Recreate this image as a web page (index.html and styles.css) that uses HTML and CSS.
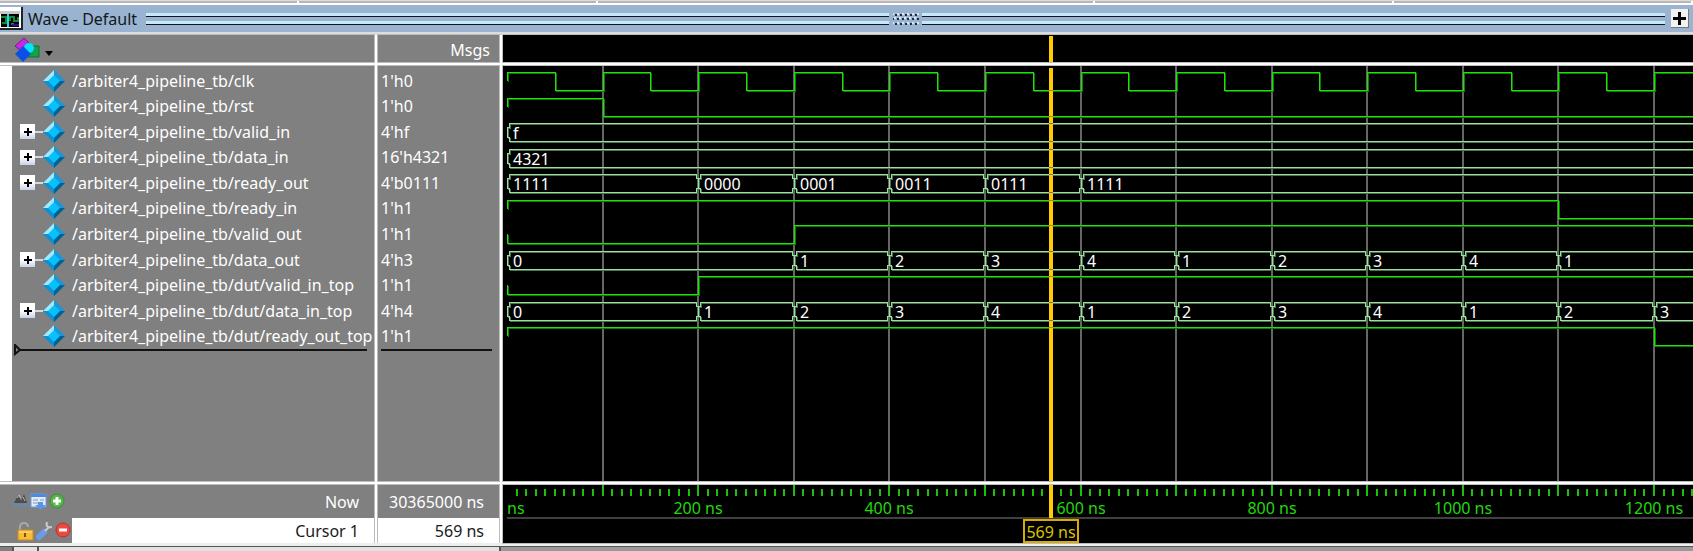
FILE: index.html
```html
<!DOCTYPE html>
<html lang="en">
<head>
<meta charset="utf-8">
<title>Wave - Default</title>
<link rel="stylesheet" href="styles.css">
</head>
<body>
<svg class="defs" aria-hidden="true">
  <symbol id="gem" viewBox="0 0 22 22">
    <path d="M11 0L22 11L11 22L0 11Z" fill="#1793d6"/>
    <path d="M11 0V6L6 11H0Z" fill="#a5e7fb"/>
    <path d="M11 0L22 11H16L11 6Z" fill="#1b96d8"/>
    <path d="M22 11L11 22V16L16 11Z" fill="#045f92"/>
    <path d="M0 11H6L11 16V22Z" fill="#128fce"/>
    <path d="M11 5L17 11L11 17L5 11Z" fill="#05c3fa"/>
  </symbol>
</svg>
<main class="app">
  <div class="edge-top"><i></i><i></i><i></i><i></i><i></i></div>
  <header class="titlebar">
    <svg class="app-icon" width="23" height="24" viewBox="0 0 23 24" aria-hidden="true">
      <path d="M0 0H21V22H0Z" fill="#fff"/><path d="M0 22H22V0" fill="none" stroke="#222" stroke-width="2"/>
      <path d="M0 4H20V7H0Z" fill="#c8c8c8"/><path d="M1 7H19V20H1Z" fill="#000"/>
      <path d="M1 10H6V16H2M10 14V10H14V14H18V10M11 17H14" fill="none" stroke="#128a3a" stroke-width="2"/>
      <path d="M8 7V20" stroke="#28d8e8" stroke-width="2"/><path d="M12 18H19" stroke="#3010a0" stroke-width="2"/>
    </svg>
    <h1 class="title">Wave - Default</h1>
    <span class="grip-lines"></span>
    <svg class="grip" width="33" height="14" aria-hidden="true"><defs><pattern id="dots" width="5" height="9" patternUnits="userSpaceOnUse"><path d="M1 2h2v2h-2zM3 6h2v2h-2z" fill="#222c38"/><path d="M3 1h2v2h-2zM0 5h2v2h-2z" fill="#d8e8f4"/></pattern></defs><path d="M4 1H30V13H4Z" fill="url(#dots)"/></svg>
    <span class="grip-lines"></span>
    <button class="dock" aria-label="Dock"><svg width="13" height="13"><path d="M5 0H8V5H13V8H8V13H5V8H0V5H5Z"/></svg></button>
  </header>
  <div class="grid">
    <div class="pane tools">
      <button class="picker" aria-label="Signal type">
        <svg width="40" height="26" viewBox="0 0 40 26">
          <path d="M0 8L9 0L15 6L7 14Z" fill="#c32be0" stroke="#7e1696"/>
          <path d="M13 8H24V19H13Z" fill="#17a04c" stroke="#087536"/>
          <circle cx="14" cy="10" r="5" fill="#00e5fb"/>
          <path d="M8 8L16 16L8 24L0 16Z" fill="#0b50e5"/>
          <path d="M30 13H38L34 18Z" fill="#000"/>
        </svg>
      </button>
    </div>
    <div class="pane msgs-head">Msgs</div>
    <div class="pane wave-head"><svg id="head" class="plot" aria-hidden="true"></svg></div>

    <div class="pane names">
      <ul class="rows" id="names"></ul>
      <svg class="marker" width="8" height="12" viewBox="0 0 8 12" aria-hidden="true"><path d="M1 1V10L6 6Z" fill="#808080" stroke="#111" stroke-width="2"/></svg>
    </div>
    <div class="pane values"><ul class="rows" id="values"></ul></div>
    <div class="pane waves"><svg id="waves" class="plot" role="img" aria-label="Signal waveforms"></svg></div>

    <div class="pane foot-names">
      <div class="foot-row">
        <svg class="foot-icons" width="59" height="20" viewBox="0 0 59 20" aria-hidden="true">
          <path d="M1 11L5 3L8 9L11 2L14 11Z" fill="#4c4c4c"/><path d="M4 6L6 3L8 6M10 5L12 9" stroke="#bbb" fill="none"/><path d="M1 13H14M3 11L1 13L3 15M12 11L14 13L12 15" stroke="#4c8fe0" fill="none"/>
          <path d="M18 2H33V15H18Z" fill="#dfeafa" stroke="#6f9fe0"/><path d="M18 2H33V5H18Z" fill="#4b8be4"/><path d="M20 8H25M20 11H28M27 8H31" stroke="#8899b0"/><path d="M25 10H30V13H33L28 18L22 13H25Z" fill="#5b94e4"/>
          <circle cx="44" cy="9" r="7" fill="#55b548" stroke="#359234"/><path d="M44 5V13M40 9H48" stroke="#fff" stroke-width="3"/>
        </svg>
        <span class="foot-cell">Now</span>
      </div>
      <div class="foot-row">
        <svg class="foot-icons" width="59" height="22" viewBox="0 0 59 22" aria-hidden="true">
          <path d="M7 10V7Q7 3 11 3Q15 3 15 7" stroke="#a8a8a8" stroke-width="2" fill="none"/><path d="M5 10H20V20H5Z" fill="#f8bc3b" stroke="#c98c1e"/><path d="M6 12H19" stroke="#ffe090"/><path d="M12 13V17" stroke="#805000" stroke-width="2"/>
          <path d="M26 17L31 12" stroke="#6b9be5" stroke-width="6" stroke-linecap="round"/><path d="M32 11L36 7M34 2Q32 8 39 7" stroke="#c5c9d0" stroke-width="2" fill="none"/>
          <circle cx="50" cy="10" r="7" fill="#e94b43" stroke="#c32c2c"/><path d="M46 10H54" stroke="#fff" stroke-width="3"/>
        </svg>
        <span class="foot-cell cursor-cell">Cursor 1</span>
      </div>
    </div>
    <div class="pane foot-values">
      <div class="foot-row"><span class="foot-cell">30365000 ns</span></div>
      <div class="foot-row"><span class="foot-cell cursor-cell">569 ns</span></div>
    </div>
    <div class="pane timeline"><svg id="ruler" class="plot" role="img" aria-label="Time ruler"></svg></div>
  </div>
  <div class="edge-bottom"><i></i><i></i><i></i><i></i></div>
</main>
<script src="wave.js"></script>
</body>
</html>
```
FILE: styles.css
```css
* { box-sizing: border-box; }
body { margin: 0; background: #808080; font-family: "Noto Sans", "DejaVu Sans", sans-serif; font-size: 16px; line-height: 20px; color: #fff; }
button { border: 0; padding: 0; background: none; font: inherit; }
svg { display: block; }
.defs { position: absolute; width: 0; height: 0; }
.app { display: flex; flex-direction: column; min-height: 100vh; overflow: hidden; }

.edge-top { display: flex; height: 5px; background: #bab5b8; border-top: 1px solid #ddd; border-bottom: 2px solid #fff; }
.edge-top i { flex: 300 1 0; border-right: 2px solid #fff; }
.edge-top i:nth-child(3) { flex-grow: 500; }
.titlebar { display: flex; align-items: center; height: 30px; padding-right: 4px; background: #9ab3d1; border-bottom: 3px solid #dcdcdc; color: #111820; }
.app-icon { flex: none; }
.title { margin: 0 9px 0 5px; font-size: 16px; font-weight: 400; line-height: 20px; white-space: nowrap; }
.grip-lines { flex: 1 1 0; height: 12px; border-bottom: 1px solid #10161e; background: linear-gradient(#c5e9f7 0 3px, #10161e 3px 4px, #9ab3d1 4px 8px, #c5e9f7 8px 11px); }
.grip { flex: none; }
.dock { display: grid; place-items: center; width: 18px; height: 19px; margin-left: 6px; background: #f2f2f2; border-right: 1px solid #777; border-bottom: 1px solid #777; }

.grid { flex: 1; display: grid; grid-template-columns: 374px 121px 1fr; grid-template-rows: 27px 1fr 58px; gap: 4px; background: #fff; }
.pane { min-width: 0; background: #808080; box-shadow: 0 0 0 1px #bdbdbd; }
.tools { padding: 3px 0 0 15px; }
.msgs-head { padding: 5px 9px; text-align: right; }
.wave-head, .waves, .timeline { position: relative; overflow: hidden; background: #000; }
.plot { position: absolute; inset: 0; width: 100%; height: 100%; font-size: 16px; }

.names { position: relative; border-left: 12px solid #fff; }
.rows { display: grid; grid-template-rows: repeat(11, 1fr); height: 285px; margin: 0 7px 0 4px; padding: 2px 0 0; list-style: none; border-bottom: 2px solid #111; }
.values .rows { margin-left: 3px; }
.rows li { display: flex; align-items: center; min-width: 0; white-space: nowrap; }
#names li { padding-left: 4px; }
.marker { position: absolute; left: 2px; top: 278px; }
.branch { display: flex; align-items: center; flex: none; width: 23px; }
.branch::after { content: ""; flex: 1; height: 2px; background: #d8d8d8; }
.branch.leaf::after { content: none; }
.expand { display: grid; place-items: center; width: 15px; height: 15px; background: linear-gradient(#fff, #fff 50%, #c9cfe6); }
.gem { flex: none; width: 22px; height: 22px; margin-right: 7px; }

.foot-names, .foot-values { display: grid; grid-template-rows: 33px 25px; }
.foot-row { display: flex; align-items: center; }
.foot-names .foot-row { padding-left: 13px; }
.foot-icons { flex: none; }
.foot-cell { flex: 1; align-self: stretch; display: flex; align-items: center; justify-content: flex-end; padding-right: 15px; }
.cursor-cell { background: #fff; color: #1a1a1a; }

.gridline { stroke: #666; stroke-width: 2; }
.bit, .bus { fill: none; stroke-width: 1; shape-rendering: crispEdges; }
.bit { stroke: #22e00c; filter: drop-shadow(1px 1px 0 #0f7a06); }
.bus { stroke: #9be0a0; filter: drop-shadow(1px 1px 0 #4a704c); }
.bus-text { fill: #fff; }
.cursor { stroke: #ffcc00; stroke-width: 4; }
.cross-bit, .cross-bus { stroke-width: 1; shape-rendering: crispEdges; }
.cross-bit { stroke: #f5601e; }
.cross-bus { stroke: #8d6a83; }
.tick { stroke: #1cc00a; stroke-width: 2; }
.tick-text { fill: #22d80c; text-anchor: middle; }
.tick-text.first { text-anchor: start; }
.baseline { stroke: #808080; stroke-width: 1; }
.cursor-box { fill: #000; stroke: #d9ab00; stroke-width: 2; }
.cursor-text { fill: #d9c400; text-anchor: middle; }

.edge-bottom { display: flex; gap: 2px; height: 8px; padding-top: 1px; border-top: 3px solid #eee; background: #555; }
.edge-bottom i { background: #e2e2e2; width: 23px; }
.edge-bottom i:nth-child(1) { width: 12px; background: #808080; }
.edge-bottom i:nth-child(3) { width: 460px; }
.edge-bottom i:nth-child(4) { flex: 1; background: #999; }
```
FILE: wave.js
```js
const TB = "/arbiter4_pipeline_tb/";
const signals = [
  { name: "clk", value: "1'h0", bit: Array.from({ length: 40 }, (_, i) => [i * 50, 1 - i % 2]) },
  { name: "rst", value: "1'h0", bit: [[0, 1], [100, 0]] },
  { name: "valid_in", value: "4'hf", bus: [[0, "f"]] },
  { name: "data_in", value: "16'h4321", bus: [[0, "4321"]] },
  { name: "ready_out", value: "4'b0111", bus: [[0, "1111"], [200, "0000"], [300, "0001"], [400, "0011"], [500, "0111"], [600, "1111"]] },
  { name: "ready_in", value: "1'h1", bit: [[0, 1], [1100, 0]] },
  { name: "valid_out", value: "1'h1", bit: [[0, 0], [300, 1]] },
  { name: "data_out", value: "4'h3", bus: [[0, "0"], [300, "1"], [400, "2"], [500, "3"], [600, "4"], [700, "1"], [800, "2"], [900, "3"], [1000, "4"], [1100, "1"]] },
  { name: "dut/valid_in_top", value: "1'h1", bit: [[0, 0], [200, 1]] },
  { name: "dut/data_in_top", value: "4'h4", bus: [[0, "0"], [200, "1"], [300, "2"], [400, "3"], [500, "4"], [600, "1"], [700, "2"], [800, "3"], [900, "4"], [1000, "1"], [1100, "2"], [1200, "3"]] },
  { name: "dut/ready_out_top", value: "1'h1", bit: [[0, 1], [1200, 0]] }
];

const END = 2000;
const CURSOR = 569;
const LEFT = 4;
const x = t => LEFT + Math.round(t * 1147 / 1200);
const rowTop = k => 6 + Math.round(k * 51 / 2);
const byId = id => document.getElementById(id);

byId("names").innerHTML = signals.map(s => `<li>${s.bus
  ? `<span class="branch"><button class="expand" aria-label="Expand ${s.name}"><svg width="8" height="8"><path d="M4 0V8M0 4H8" stroke="#000" stroke-width="2"/></svg></button></span>`
  : `<span class="branch leaf"></span>`}<svg class="gem" aria-hidden="true"><use href="#gem"/></svg><span>${TB}${s.name}</span></li>`).join("");
byId("values").innerHTML = signals.map(s => `<li>${s.value}</li>`).join("");

const cursorX = x(CURSOR);
const vline = (cls, px, y1, y2) => `<line class="${cls}" x1="${px}" x2="${px}" y1="${y1}" y2="${y2}"/>`;
const hline = (cls, y) => `<line class="${cls}" x1="${cursorX - 2}" x2="${cursorX + 2}" y1="${y}" y2="${y}"/>`;

let lines = "", traces = "", crosses = "";
for (let t = 100; t < END; t += 100) lines += vline("gridline", x(t), 0, "100%");

signals.forEach((s, k) => {
  const hi = rowTop(k), lo = hi + 18;
  if (s.bit) {
    const level = v => v ? hi : lo;
    let d = `M${LEFT} ${hi + 9}`;
    s.bit.forEach(([t, v]) => { d += `H${x(t)}V${level(v)}`; });
    traces += `<path class="bit" d="${d}H${x(END)}"/>`;
    const now = s.bit.filter(([t]) => t <= CURSOR).pop();
    crosses += hline("cross-bit", level(now[1]));
    return;
  }
  s.bus.forEach(([t, text], i) => {
    const a = x(t), b = x(s.bus[i + 1] ? s.bus[i + 1][0] : END);
    traces += `<path class="bus" d="M${a} ${hi + 4}H${a + 2}V${hi}H${b - 2}V${hi + 4}H${b}M${a} ${hi + 4}V${lo - 4}H${a + 2}V${lo}H${b - 2}V${lo - 4}H${b}"/>`;
    traces += `<text class="bus-text" x="${a + 6}" y="${hi + 16}">${text}</text>`;
  });
  crosses += hline("cross-bus", hi) + hline("cross-bus", lo);
});
byId("waves").innerHTML = lines + traces + vline("cursor", cursorX, 2, "100%") + crosses;
byId("head").innerHTML = vline("cursor", cursorX, 1, "100%");

const visible = byId("ruler").clientWidth;
let ruler = `<text class="tick-text first" x="${LEFT}" y="29">ns</text>`;
for (let t = 10; t < END; t += 10) ruler += vline("tick", x(t), t % 100 ? 4 : 0, 11);
for (let t = 200; x(t) + 30 < visible; t += 200) ruler += `<text class="tick-text" x="${x(t)}" y="29">${t} ns</text>`;
ruler += `<line class="baseline" x1="${LEFT}" x2="100%" y1="33" y2="33"/>`;
ruler += vline("cursor", cursorX, 0, 33);
ruler += `<rect class="cursor-box" x="${cursorX - 27}" y="35" width="54" height="22"/><text class="cursor-text" x="${cursorX}" y="53">${CURSOR} ns</text>`;
byId("ruler").innerHTML = ruler;
```
